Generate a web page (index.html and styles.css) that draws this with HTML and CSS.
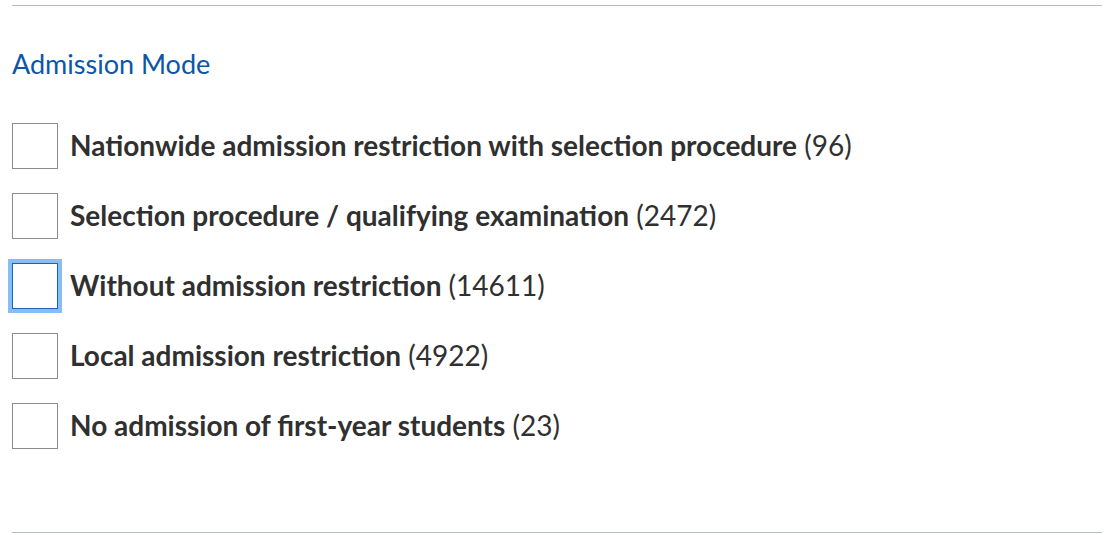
FILE: index.html
```html
<!DOCTYPE html>
<html lang="en">

<head>
    <meta charset="UTF-8">
    <meta name="viewport" content="width=device-width, initial-scale=1.0">
    <title>Admission Mode</title>
    <link rel="stylesheet" href="styles.css">
</head>

<body>
    <section class="filter">
        <h2 class="filter-title">Admission Mode</h2>

        <ul class="filter-options">
            <li class="option">
                <input type="checkbox" id="mode1" class="option-box">
                <label for="mode1"><strong>Nationwide admission restriction with selection procedure</strong> (96)</label>
            </li>
            <li class="option">
                <input type="checkbox" id="mode2" class="option-box">
                <label for="mode2"><strong>Selection procedure / qualifying examination</strong> (2472)</label>
            </li>
            <li class="option">
                <input type="checkbox" id="mode3" class="option-box is-focused">
                <label for="mode3"><strong>Without admission restriction</strong> (14611)</label>
            </li>
            <li class="option">
                <input type="checkbox" id="mode4" class="option-box">
                <label for="mode4"><strong>Local admission restriction</strong> (4922)</label>
            </li>
            <li class="option">
                <input type="checkbox" id="mode5" class="option-box">
                <label for="mode5"><strong>No admission of first-year students</strong> (23)</label>
            </li>
        </ul>
    </section>
</body>

</html>
```

FILE: styles.css
```css
* {
    box-sizing: border-box;
    margin: 0;
    padding: 0;
}

body {
    background-color: #fff;
    font-family: 'Lato', 'Noto Sans', sans-serif;
    color: #303030;
}

.filter {
    width: 1090px;
    margin: 5px 0 0 12px;
    padding: 40px 0 83px;
    border-top: 1px solid #b3bac8;
    border-bottom: 1px solid #b3bac8;
}

.filter-title {
    font-size: 27px;
    font-weight: 400;
    line-height: 36px;
    color: #0a56a8;
    margin-bottom: 41px;
}

.filter-options {
    list-style: none;
    display: flex;
    flex-direction: column;
    gap: 24px;
}

.option {
    display: flex;
    align-items: center;
    gap: 12px;
    height: 46px;
}

.option-box {
    appearance: none;
    -webkit-appearance: none;
    flex: none;
    width: 46px;
    height: 46px;
    margin: 0;
    background: #fff;
    border: 1px solid #8c8c8c;
}

.option-box.is-focused {
    border-color: #1d62b6;
    box-shadow: 0 0 0 4px #85bff7;
}

.option label {
    font-size: 28px;
    line-height: 34px;
    padding-bottom: 3px;
}

.option strong {
    font-weight: 700;
}
```
